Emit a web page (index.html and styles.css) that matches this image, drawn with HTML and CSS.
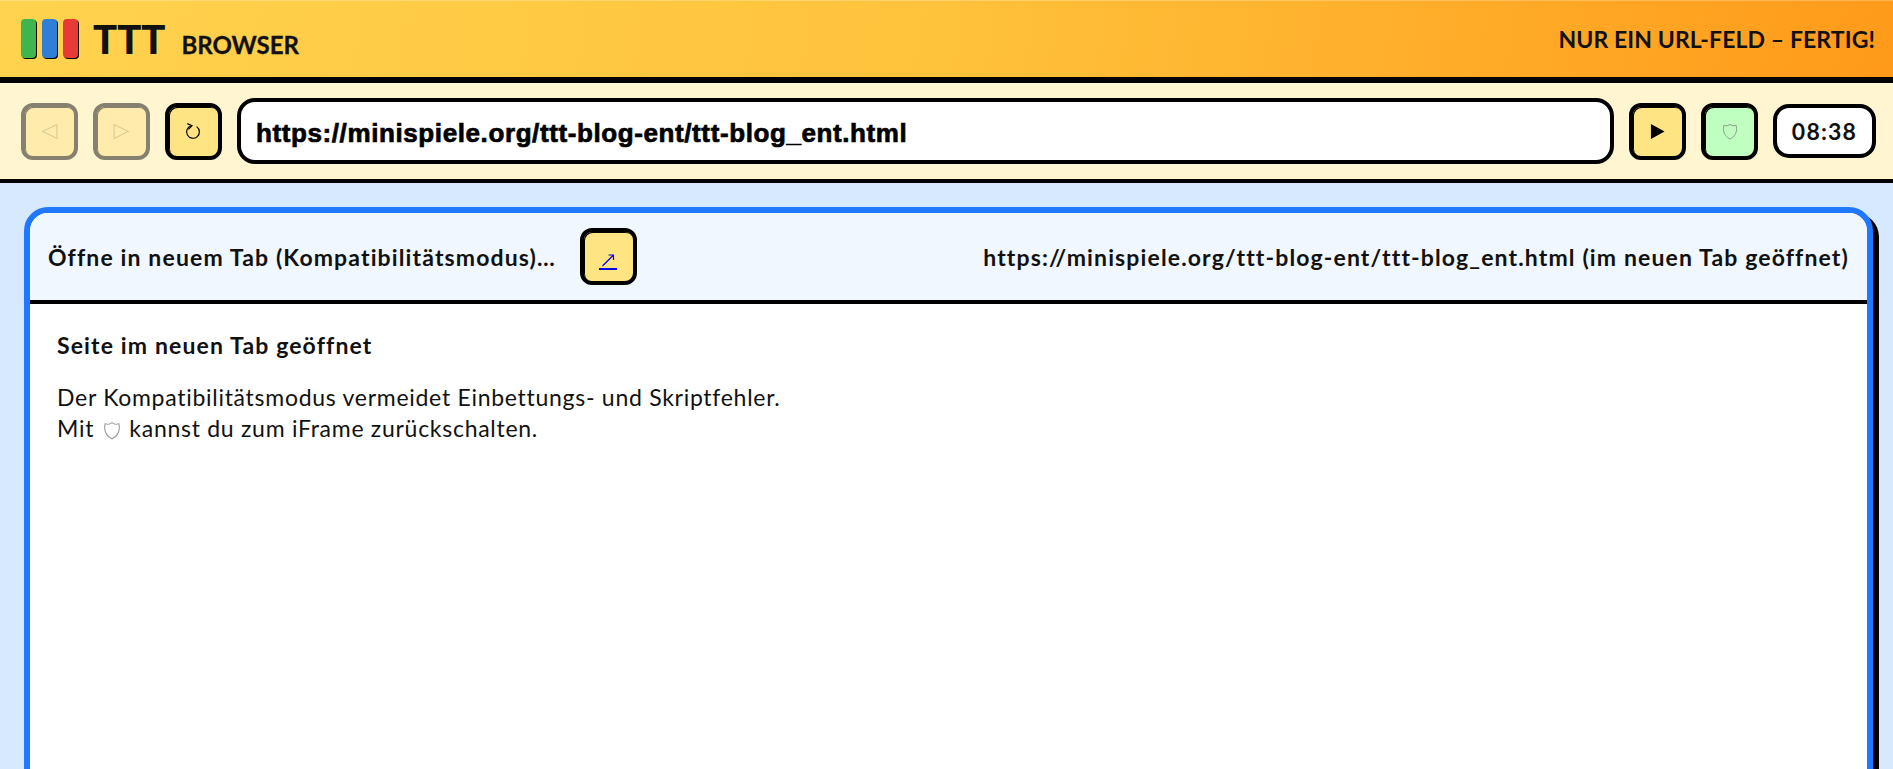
FILE: index.html
```html
<!DOCTYPE html>
<html lang="de">
<head>
<meta charset="utf-8">
<title>TTT Browser</title>
<link rel="stylesheet" href="styles.css">
</head>
<body>
<header class="top">
  <div class="brand">
    <div class="bars"><span class="bar green"></span><span class="bar blue"></span><span class="bar red"></span></div>
    <div class="wordmark"><span class="ttt">TTT</span><span class="browser">BROWSER</span></div>
  </div>
  <div class="slogan">NUR EIN URL-FELD – FERTIG!</div>
</header>
<nav class="toolbar">
  <button class="btn off"><svg class="ico ico-lg" viewBox="0 0 16 16"><path class="ghost" d="M15 1.5V14.5L1.5 8Z"/></svg></button>
  <button class="btn off"><svg class="ico ico-lg" viewBox="0 0 16 16"><path class="ghost" d="M1 1.5V14.5L14.5 8Z"/></svg></button>
  <button class="btn"><svg class="ico ico-lg" viewBox="0 0 16 16"><path class="line" d="M10.9 3.4A6 6 0 1 1 5.8 2.6"/><path class="line" d="M2.2 .6 6.6 2.6 3.2 6"/></svg></button>
  <div class="url">https://minispiele.org/ttt-blog-ent/ttt-blog_ent.html</div>
  <button class="btn"><svg class="ico" viewBox="0 0 16 16"><path d="M1 0V16L15.5 8Z"/></svg></button>
  <button class="btn safe"><svg class="shield" viewBox="0 0 16 18"><path d="M1.5 2.5Q5 4 8 1.5 11 4 14.5 2.5C15.5 7 15.5 13 8 17 .5 13 .5 7 1.5 2.5Z"/></svg></button>
  <div class="clock">08:38</div>
</nav>
<main class="stage">
  <section class="card">
    <div class="card-head">
      <div class="status">
        <span>Öffne in neuem Tab (Kompatibilitätsmodus)…</span>
        <div class="btn open"><a class="open-link" href="#" aria-label="In neuem Tab öffnen"><svg class="arrow" viewBox="0 0 18 14"><path d="M3.5 13 14.5 2M9.5 2H14.5V7"/></svg></a></div>
      </div>
      <div class="addr">https://minispiele.org/ttt-blog-ent/ttt-blog_ent.html (im neuen Tab geöffnet)</div>
    </div>
    <div class="card-body">
      <p class="lead">Seite im neuen Tab geöffnet</p>
      <p class="text">Der Kompatibilitätsmodus vermeidet Einbettungs- und Skriptfehler.<br>Mit <svg class="shield inline" viewBox="0 0 16 18"><path d="M1.5 2.5Q5 4 8 1.5 11 4 14.5 2.5C15.5 7 15.5 13 8 17 .5 13 .5 7 1.5 2.5Z"/></svg> kannst du zum iFrame zurückschalten.</p>
    </div>
  </section>
</main>
</body>
</html>
```
FILE: styles.css
```css
* { box-sizing: border-box; }
html, body { margin: 0; height: 100%; overflow: hidden; }
body { font-family: "Lato", "Noto Sans", sans-serif; color: #111; background: #d6e9ff; }

.top { height: 83px; border-bottom: 6px solid #000; display: flex; align-items: center; justify-content: space-between; padding: 0 18px 0 21px; background: linear-gradient(100deg, #ffd34f 0%, #ffc23b 50%, #ff9a1a 100%); box-shadow: inset 0 1px 0 rgba(255, 255, 255, .25); }
.brand { display: flex; align-items: center; }
.bars { display: flex; gap: 6px; margin-right: 15px; }
.bar { width: 15px; height: 39px; border-radius: 4px; box-shadow: 1px 1px 0 #000; }
.green { background: #3fb54f; }
.blue { background: #2f7fd6; }
.red { background: #e83a36; }
.wordmark { display: flex; align-items: baseline; gap: 16px; }
.ttt { font-size: 40px; font-weight: 900; line-height: 1; color: #111; }
.browser { font-size: 24px; font-weight: 700; line-height: 1; -webkit-text-stroke: .3px #111; }
.slogan { font-size: 23px; font-weight: 700; letter-spacing: .1px; }

.toolbar { height: 100px; border-bottom: 4px solid #000; background: #fff5d1; display: flex; align-items: center; gap: 15px; padding: 0 17px 0 21px; }
.btn { width: 57px; height: 57px; flex: none; border: 4px solid #000; border-radius: 12px; box-shadow: inset 1px 1px 0 #000; background: #ffe484; display: flex; align-items: center; justify-content: center; color: #000; padding: 0; }
.off { opacity: .47; }
.safe { background: #bfffbf; }
.ico { width: 15px; height: 15px; overflow: visible; }
.ico-lg { width: 17px; height: 17px; }
.ghost { fill: none; stroke: #a89a50; stroke-width: 1; }
.line { fill: none; stroke: #000; stroke-width: 1.1; }
.url { flex: 1; height: 66px; border: 4px solid #000; border-radius: 18px; background: #fff; display: flex; align-items: center; padding: 5px 15px 0; font-family: "Liberation Sans", sans-serif; font-weight: 700; font-size: 26px; letter-spacing: .6px; -webkit-text-stroke: .7px #000; color: #000; }
.clock { width: 103px; height: 54px; border: 4px solid #000; border-radius: 16px; background: #fff; display: flex; align-items: center; justify-content: center; font-weight: 700; font-size: 23px; letter-spacing: 1.2px; flex: none; }
.shield { width: 16px; height: 17px; fill: none; stroke: #8a9a8a; stroke-width: 1; }
.inline { width: 18px; height: 19px; margin: 0 2px; vertical-align: -3px; stroke: #999; }

.stage { padding: 24px 20px 0 24px; height: 586px; }
.card { height: 700px; border: 6px solid #1f78ff; border-radius: 24px; box-shadow: 6px 6px 0 #000; background: #fff; overflow: hidden; }
.card-head { height: 91px; border-bottom: 4px solid #000; background: #f0f7ff; display: flex; align-items: center; justify-content: space-between; padding: 0 18px; font-weight: 700; font-size: 23px; letter-spacing: 1.13px; }
.status { display: flex; align-items: center; gap: 24px; }
.open { padding-top: 10px; }
.open-link { display: block; width: 18px; height: 17px; border-bottom: 2px solid #00e; }
.arrow { display: block; width: 18px; height: 14px; fill: none; stroke: #00e; stroke-width: 1.2; }
.card-body { padding: 26px 27px; font-size: 23px; letter-spacing: .72px; line-height: 31px; }
.lead { margin: 0 0 21px; font-weight: 700; letter-spacing: 1.13px; }
.text { margin: 0; }
```
